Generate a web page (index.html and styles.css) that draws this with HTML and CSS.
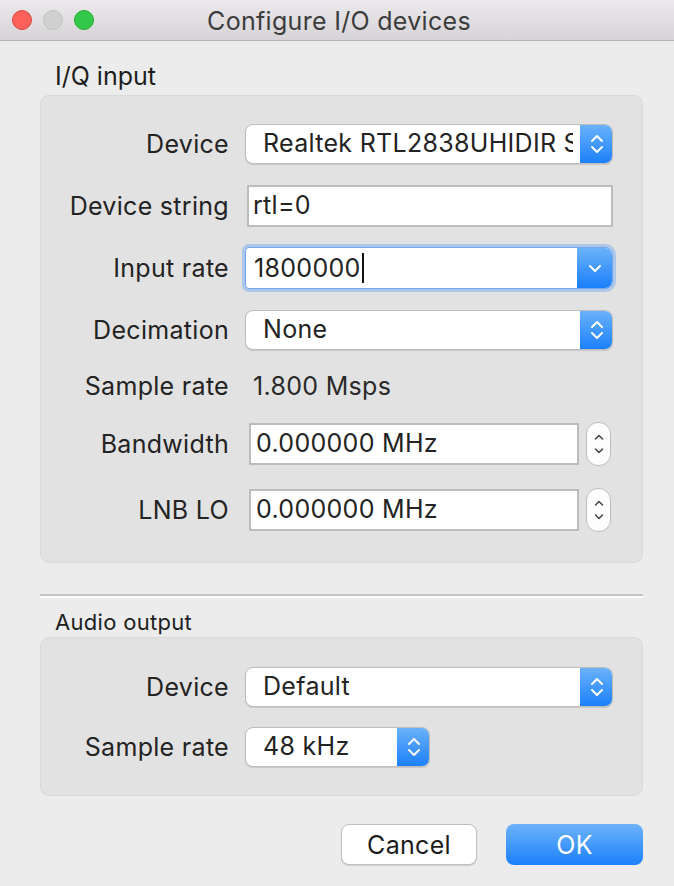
FILE: index.html
```html
<!DOCTYPE html>
<html>
<head>
<meta charset="utf-8">
<title>Configure I/O devices</title>
<link rel="stylesheet" href="styles.css">
</head>
<body>
<div class="window">
  <div class="titlebar">
    <div class="lights">
      <span class="light red"></span>
      <span class="light gray"></span>
      <span class="light green"></span>
    </div>
    <div class="title">Configure I/O devices</div>
    <div></div>
  </div>

  <div class="content">
    <div class="group-title big">I/Q input</div>
    <div class="group iq">
      <div class="row">
        <div class="label">Device</div>
        <div class="popup">
          <span class="popup-text">Realtek RTL2838UHIDIR SN: 00000001</span>
          <span class="popup-arrow">
            <svg width="14" height="22" viewBox="0 0 14 22"><polyline points="2,8 7,3 12,8" /><polyline points="2,14 7,19 12,14" /></svg>
          </span>
        </div>
      </div>
      <div class="row">
        <div class="label">Device string</div>
        <div class="lineedit wide">rtl=0</div>
      </div>
      <div class="row">
        <div class="label">Input rate</div>
        <div class="editcombo">
          <span class="edit-text">1800000<span class="caret"></span></span>
          <span class="drop-arrow">
            <svg width="14" height="10" viewBox="0 0 14 10"><polyline points="2,3 7,8 12,3" /></svg>
          </span>
        </div>
      </div>
      <div class="row">
        <div class="label">Decimation</div>
        <div class="popup">
          <span class="popup-text">None</span>
          <span class="popup-arrow">
            <svg width="14" height="22" viewBox="0 0 14 22"><polyline points="2,8 7,3 12,8" /><polyline points="2,14 7,19 12,14" /></svg>
          </span>
        </div>
      </div>
      <div class="row short">
        <div class="label">Sample rate</div>
        <div class="value">1.800 Msps</div>
      </div>
      <div class="row spinrow">
        <div class="label">Bandwidth</div>
        <div class="spin">
          <div class="lineedit">0.000000 MHz</div>
          <div class="stepper">
            <svg width="10" height="30" viewBox="0 0 10 30"><polyline points="1.5,10 5,6.5 8.5,10" /><polyline points="1.5,20 5,23.5 8.5,20" /></svg>
          </div>
        </div>
      </div>
      <div class="row spinrow">
        <div class="label">LNB LO</div>
        <div class="spin">
          <div class="lineedit">0.000000 MHz</div>
          <div class="stepper">
            <svg width="10" height="30" viewBox="0 0 10 30"><polyline points="1.5,10 5,6.5 8.5,10" /><polyline points="1.5,20 5,23.5 8.5,20" /></svg>
          </div>
        </div>
      </div>
    </div>

    <div class="separator"></div>

    <div class="group-title small">Audio output</div>
    <div class="group audio">
      <div class="row">
        <div class="label">Device</div>
        <div class="popup">
          <span class="popup-text">Default</span>
          <span class="popup-arrow">
            <svg width="14" height="22" viewBox="0 0 14 22"><polyline points="2,8 7,3 12,8" /><polyline points="2,14 7,19 12,14" /></svg>
          </span>
        </div>
      </div>
      <div class="row">
        <div class="label">Sample rate</div>
        <div class="popup narrow">
          <span class="popup-text">48 kHz</span>
          <span class="popup-arrow">
            <svg width="14" height="22" viewBox="0 0 14 22"><polyline points="2,8 7,3 12,8" /><polyline points="2,14 7,19 12,14" /></svg>
          </span>
        </div>
      </div>
    </div>

    <div class="buttons">
      <div class="button cancel">Cancel</div>
      <div class="button ok">OK</div>
    </div>
  </div>
</div>
</body>
</html>
```

FILE: styles.css
```css
* { box-sizing: border-box; }

html, body {
  margin: 0;
  padding: 0;
}

body {
  width: 674px;
  height: 886px;
  overflow: hidden;
  background: #ececec;
  font-family: Inter, "Noto Sans", "Liberation Sans", sans-serif;
  letter-spacing: 0.3px;
  color: #232323;
}

.window {
  width: 674px;
  height: 886px;
}

.titlebar {
  height: 41px;
  display: grid;
  grid-template-columns: 1fr auto 1fr;
  align-items: center;
  background: linear-gradient(#ebe9eb, #d6d4d6);
  border-bottom: 1px solid #b4b4b4;
}

.lights {
  display: flex;
  gap: 11px;
  padding-left: 12px;
}

.light {
  width: 20px;
  height: 20px;
  border-radius: 50%;
  display: block;
}

.light.red { background: #fc605b; border: 1px solid #e0443e; }
.light.gray { background: #d1d0d1; border: 1px solid #c3c2c3; }
.light.green { background: #34c84a; border: 1px solid #27aa35; }

.title {
  font-size: 25px;
  color: #3c3c3c;
  padding-top: 1px;
  padding-left: 4px;
}

.content {
  padding: 0 31px 0 40px;
}

.group-title {
  padding-left: 15px;
  color: #1e1e1e;
}

.group-title.big {
  font-size: 25px;
  letter-spacing: 0;
  height: 30px;
  line-height: 30px;
  margin-top: 20px;
  margin-bottom: 4px;
}

.group-title.small {
  font-size: 22px;
  height: 26px;
  line-height: 26px;
  margin-top: 11px;
  margin-bottom: 2px;
}

.group {
  background: #e2e2e2;
  border: 1px solid #d9d9d9;
  border-radius: 9px;
  display: flex;
  flex-direction: column;
  gap: 20px;
  padding-right: 29px;
}

.group.iq {
  padding-top: 27px;
  padding-bottom: 29px;
}

.group.audio {
  padding-top: 28px;
  padding-bottom: 27px;
  gap: 18px;
}

.row {
  display: grid;
  grid-template-columns: 188px 1fr;
  column-gap: 16px;
  align-items: center;
  height: 42px;
  font-size: 25px;
}

.row.short { height: 30px; }
.row.spinrow { height: 46px; }

.label {
  text-align: right;
  white-space: nowrap;
}

.value {
  padding-left: 8px;
  color: #2a2a2a;
}

/* pop-up button */
.popup {
  height: 40px;
  display: flex;
  align-items: stretch;
  background: #fff;
  border: 1px solid #bdbdbd;
  border-radius: 8px;
  box-shadow: 0 1px 1px rgba(0, 0, 0, 0.12);
  overflow: hidden;
}

.popup.narrow {
  width: 185px;
}

.popup-text {
  flex: 1;
  min-width: 0;
  white-space: nowrap;
  overflow: hidden;
  padding-left: 17px;
  margin-right: 7px;
  line-height: 37px;
}

.popup-arrow {
  width: 33px;
  flex: none;
  display: flex;
  align-items: center;
  justify-content: center;
  background: linear-gradient(#6cb3fa, #1a7ffa);
  margin: -1px -1px -1px 0;
}

.popup-arrow polyline,
.drop-arrow polyline {
  fill: none;
  stroke: #fff;
  stroke-width: 2;
  stroke-linecap: round;
  stroke-linejoin: round;
}

/* line edits */
.lineedit {
  height: 42px;
  background: #fff;
  border: 2px solid #bcbcbc;
  padding-left: 4px;
  line-height: 37px;
  white-space: nowrap;
}

.lineedit.wide {
  margin-left: 2px;
}

/* editable combo with focus */
.editcombo {
  height: 42px;
  display: flex;
  background: #fff;
  border: 1px solid #73a6ec;
  border-radius: 4px 8px 8px 4px;
  box-shadow: 0 0 0 3px rgba(120, 172, 240, 0.5);
  overflow: hidden;
}

.edit-text {
  flex: 1;
  padding-left: 8px;
  line-height: 39px;
  display: flex;
  align-items: center;
}

.caret {
  display: inline-block;
  width: 2px;
  height: 30px;
  background: #111;
  margin-left: 1px;
}

.drop-arrow {
  width: 35px;
  flex: none;
  display: flex;
  align-items: center;
  justify-content: center;
  background: linear-gradient(#6cb3fa, #1a7ffa);
}

/* spin boxes */
.spin {
  display: flex;
  align-items: center;
  gap: 7px;
  padding-left: 4px;
  padding-right: 2px;
}

.spin .lineedit {
  flex: 1;
  padding-left: 5px;
}

.stepper {
  width: 25px;
  height: 44px;
  border: 1px solid #bdbdbd;
  border-radius: 12px;
  background: #fdfdfd;
  display: flex;
  align-items: center;
  justify-content: center;
}

.stepper polyline {
  fill: none;
  stroke: #4a4a4a;
  stroke-width: 1.6;
  stroke-linecap: round;
  stroke-linejoin: round;
}

.separator {
  margin-top: 31px;
  height: 4px;
  border-top: 2px solid #c4c4c4;
  border-bottom: 2px solid #fbfbfb;
}

.buttons {
  display: flex;
  justify-content: flex-end;
  gap: 29px;
  margin-top: 28px;
}

.button {
  height: 41px;
  border-radius: 8px;
  font-size: 25px;
  display: flex;
  align-items: center;
  justify-content: center;
}

.button.cancel {
  width: 136px;
  background: #fff;
  border: 1px solid #bfbfbf;
  box-shadow: 0 1px 1px rgba(0, 0, 0, 0.12);
  color: #1c1c1c;
}

.button.ok {
  width: 137px;
  background: linear-gradient(#6db3fa, #1b80fb);
  color: #fff;
}
```
